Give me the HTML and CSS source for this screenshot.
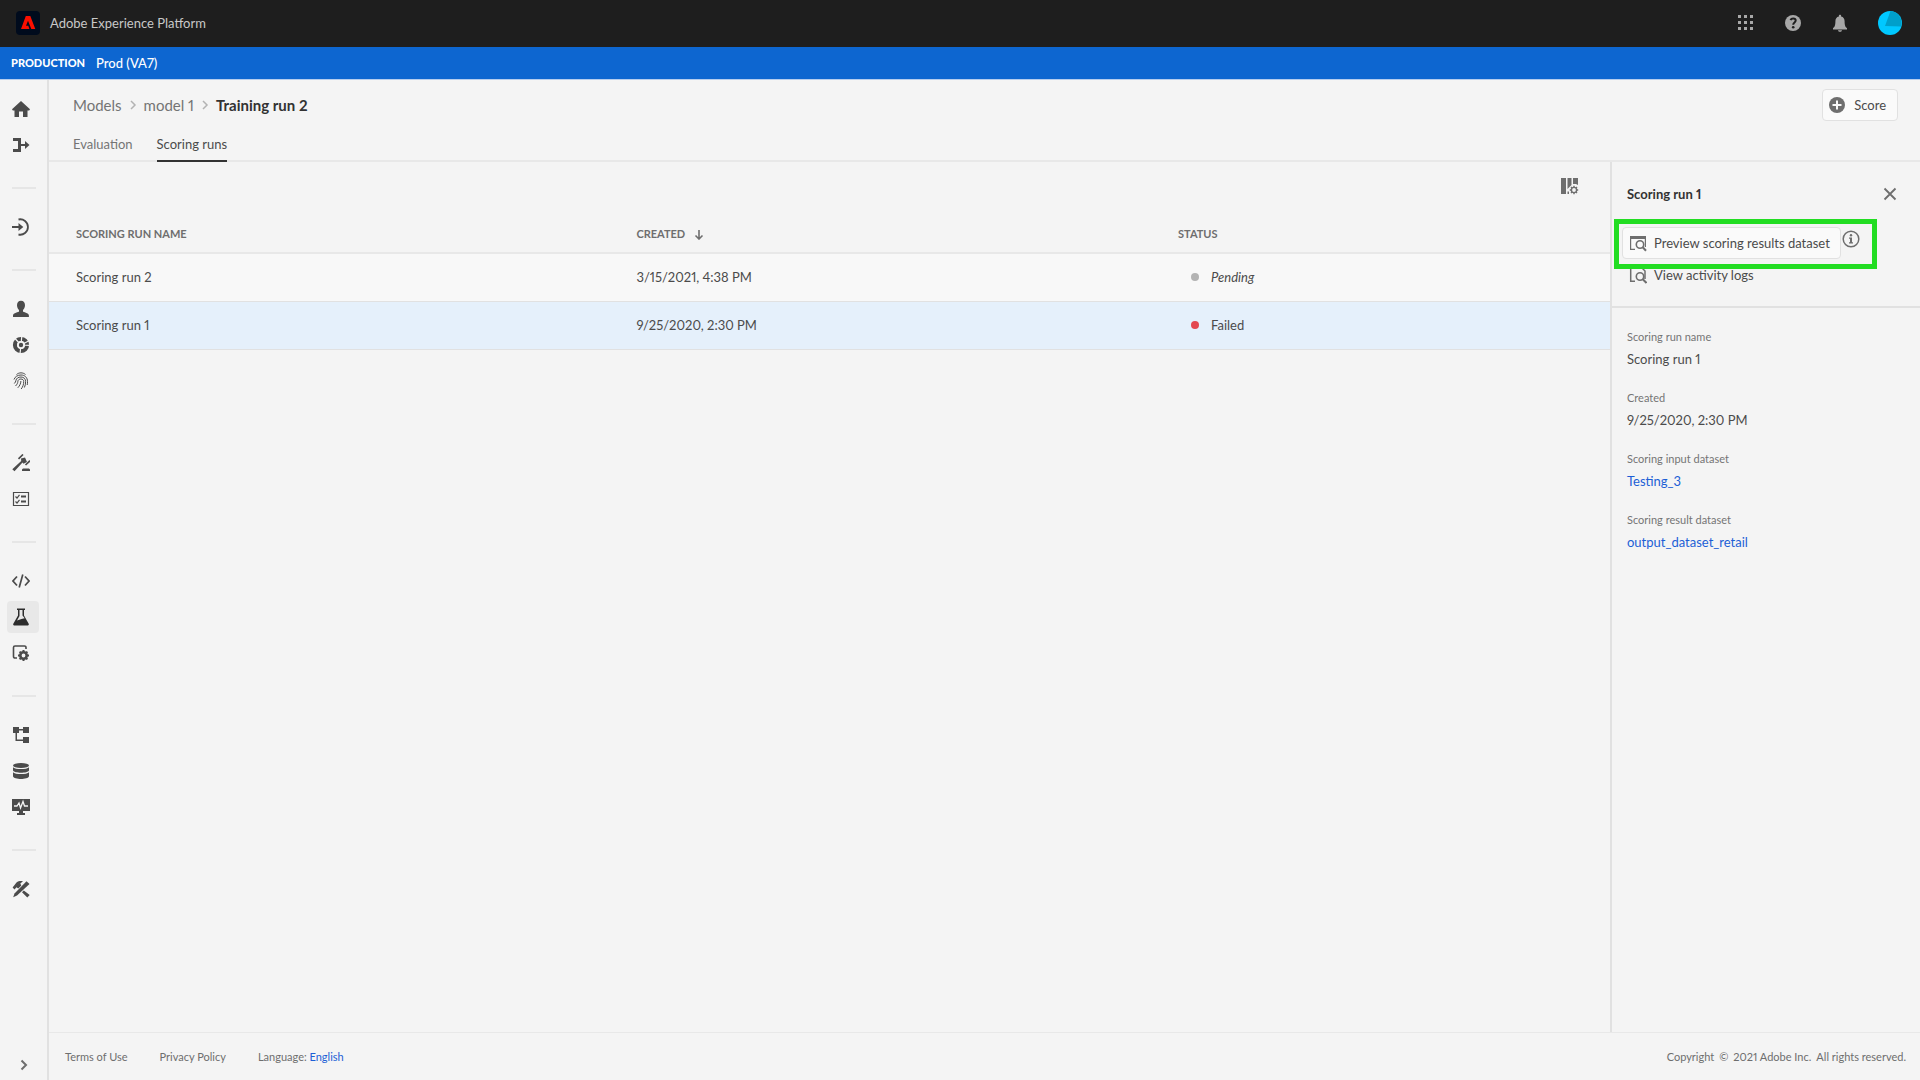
FILE: index.html
```html
<!DOCTYPE html>
<html lang="en">
<head>
<meta charset="UTF-8" />
<meta name="viewport" content="width=device-width, initial-scale=1" />
<title>Adobe Experience Platform</title>
<link rel="stylesheet" href="styles.css">
</head>
<body>

<header class="top-bar">
  <svg class="logo" viewBox="0 0 24 24" aria-hidden="true">
    <rect width="24" height="24" rx="4" fill="#000b1d"/>
    <path d="M9.800 5h4.500L19.300 18h-4l-3.300-8.200-2 5h2.300l1.100 3.200H5z" fill="#fa0f00"/>
  </svg>
  <span class="app-name">Adobe Experience Platform</span>
  <div class="top-actions">
    <button class="icon-btn" aria-label="Apps">
      <svg width="18" height="18" viewBox="0 0 18 18"><path d="M1 1h3v3H1zM7 1h3v3H7zM13 1h3v3h-3zM1 7h3v3H1zM7 7h3v3H7zM13 7h3v3h-3zM1 13h3v3H1zM7 13h3v3H7zM13 13h3v3h-3z"/></svg>
    </button>
    <button class="icon-btn" aria-label="Help">
      <svg width="18" height="18" viewBox="0 0 18 18"><circle cx="9" cy="9" r="8"/><path d="M6.500 6.200C7 4.900 8 4.400 9.100 4.400c1.500 0 2.600.9 2.600 2.200C11.700 8.500 9.200 8.600 9.200 10.800" fill="none" stroke="#1e1e1e" stroke-width="2"/><circle cx="9.200" cy="13.200" r="1.300" fill="#1e1e1e"/></svg>
    </button>
    <button class="icon-btn" aria-label="Notifications">
      <svg width="18" height="18" viewBox="0 0 18 18"><path d="M9 .8c.7 0 1.100.4 1.100 1v.6c2.400.5 3.500 2.300 3.500 4.800 0 4.300.9 5.900 2.400 6.800v1.400H2V14c1.500-.9 2.400-2.500 2.400-6.800 0-2.500 1.100-4.300 3.500-4.800v-.6c0-.6.4-1 1.100-1zM7 16.200h4c-.2.900-1 1.600-2 1.600s-1.800-.7-2-1.600z"/></svg>
    </button>
    <button class="avatar" aria-label="Account">
      <svg width="24" height="24" viewBox="0 0 24 24"><circle cx="12" cy="12" r="12" fill="#00c8ff"/><path d="M12.500 0A12 12 0 0 1 23 15.500L7 15z" fill="#009fca"/></svg>
    </button>
  </div>
</header>

<div class="env-bar"><strong>PRODUCTION</strong><span>Prod (VA7)</span></div>

<div class="shell">
  <nav class="rail" aria-label="Main">
    <a href="#" class="rail-item" aria-label="Home"><svg viewBox="0 0 18 18"><path d="M9 1l9 8.300-.8 1.200H15.500V17H11v-5.500H7V17H2.500v-6.500H.8L0 9.300z"/></svg></a>
    <a href="#" class="rail-item" aria-label="Workflows"><svg viewBox="0 0 18 18"><path d="M1 2h8v6h4V5l4.500 4-4.500 4v-3H9v6H1v-3h5V5H1z"/></svg></a>
    <hr>
    <a href="#" class="rail-item" aria-label="Sources"><svg viewBox="0 0 18 18"><path d="M0 8h6.500V5l4.800 4-4.800 4v-3H0z"/><path d="M6.500 1.500A7.700 7.700 0 1 1 6.500 16.500" fill="none" stroke="currentColor" stroke-width="1.800"/></svg></a>
    <hr>
    <a href="#" class="rail-item" aria-label="Profiles"><svg viewBox="0 0 18 18"><path d="M9 .8c2.600 0 4 2 4 4.500 0 2.200-1.200 3.900-2 4.700v1.500c0 .5 5.900 1.300 5.900 3.900V17H1v-1.600c0-2.600 6-3.400 6-3.900V10C6.200 9.200 5 7.500 5 5.300 5 2.800 6.400.8 9 .8z"/></svg></a>
    <a href="#" class="rail-item" aria-label="Segments"><svg viewBox="0 0 18 18"><circle cx="9" cy="9" r="6" fill="none" stroke="currentColor" stroke-width="4.200"/><path d="M9 9L9.800 0M9 9L17.500 4.500M9 9l9 .3M9 9L8 18M9 9L3 2.500" fill="none" stroke="#f4f4f4" stroke-width="1.200"/><circle cx="9" cy="9" r="3.900" fill="#f4f4f4"/><circle cx="9" cy="9" r="2.200"/></svg></a>
    <a href="#" class="rail-item" aria-label="Identities"><svg viewBox="0 0 18 18"><path d="M4.500 2.500C7.200.3 10.800.3 13.500 2.500M2 7.500C3 4.600 5.700 3 9 3c3.800 0 6.500 2.600 6.500 6.500 0 1.200 0 2.300-.3 3.500M2.300 11.500c1-1 1.500-2 1.600-3C4.300 6.300 6.300 5 9 5c2.700 0 4.600 1.900 4.600 4.500 0 2.200-.3 4.200-1.200 6M3.500 14c1.600-1.500 2.300-3 2.400-4.800C6 7.900 7.300 7 8.900 7c1.700 0 2.800 1.100 2.800 2.500 0 2.900-.8 5.300-2.500 7.500M5.800 15.800c1.900-2 3-4.200 3.100-6.800" fill="none" stroke="currentColor" stroke-width="1"/></svg></a>
    <hr>
    <a href="#" class="rail-item" aria-label="Policies"><svg viewBox="0 0 18 18"><path d="M9 4.500L13 3.500l2 4.500-3.500 1.800-1-1.300-8 8.800-2.200-2 8.900-8.300zM11 14.500h6l1 1v1.500h-8v-1.500z"/><path d="M6.500 4.800L11 .5M13.500 11L18 6.700" fill="none" stroke="currentColor" stroke-width="1.700"/></svg></a>
    <a href="#" class="rail-item" aria-label="Requests"><svg viewBox="0 0 18 18"><path d="M1.500 2.500h15v13h-15z" fill="none" stroke="currentColor" stroke-width="1.200"/><path d="M9 5.500h5v2H9zM9 10.500h5v2H9z"/><path d="M3.500 6.500L5 8l2.500-3.200M3.500 11.500L5 13l2.500-3.200" fill="none" stroke="currentColor" stroke-width="1.200"/></svg></a>
    <hr>
    <a href="#" class="rail-item" aria-label="Notebooks"><svg viewBox="0 0 18 18"><path d="M5 4.500L1 9l4 4.500M13 4.500L17 9l-4 4.500M10.800 2.500L7.200 15.500" fill="none" stroke="currentColor" stroke-width="1.700"/></svg></a>
    <a href="#" class="rail-item active" aria-label="Models" aria-current="page"><svg viewBox="0 0 18 18"><path d="M5 .5h8V2h-1v5.500l4.700 8.300c.3.800 0 1.700-.9 1.700H2.200c-.9 0-1.200-.9-.9-1.700L6 7.500V2H5zM7.500 2v6L5 12.500l4.500-1.500 3.200-.8L10.500 7.500V2z" fill-rule="evenodd"/></svg></a>
    <a href="#" class="rail-item" aria-label="Services"><svg viewBox="0 0 18 18"><path d="M5 14H3a1.500 1.500 0 0 1-1.500-1.500v-9A1.500 1.500 0 0 1 3 2h9.500A1.500 1.500 0 0 1 14 3.500V5" fill="none" stroke="currentColor" stroke-width="1.600"/><circle cx="11.500" cy="11.500" r="3.200" fill="none" stroke="currentColor" stroke-width="2.600"/><path d="M11.500 6v2M11.500 15v2M6 11.500h2M15 11.500h2M7.600 7.600L9 9M14 14l1.400 1.400M7.600 15.400L9 14M14 9l1.400-1.400" fill="none" stroke="currentColor" stroke-width="2"/></svg></a>
    <hr>
    <a href="#" class="rail-item" aria-label="Schemas"><svg viewBox="0 0 18 18"><path d="M1 1h6v2h4V1h6v6h-6V4.500H7V7H5v6.500h6V11h6v6h-6v-2H3.500V7H1z"/></svg></a>
    <a href="#" class="rail-item" aria-label="Datasets"><svg viewBox="0 0 18 18"><ellipse cx="9" cy="3.500" rx="8" ry="2.600"/><path d="M1 5.200c2 2.500 14 2.500 16 0v3.300c-1 3-15 3-16 0zM1 10.200c2 2.500 14 2.500 16 0v4c-1 3.600-15 3.600-16 0z"/></svg></a>
    <a href="#" class="rail-item" aria-label="Monitoring"><svg viewBox="0 0 18 18"><path d="M0 1h18v12h-7v2h2v2H5v-2h2v-2H0z"/><path d="M2 8h3l2-3 1.500 5L11 3.500 12.500 8H16" fill="none" stroke="#f4f4f4" stroke-width="1.300"/></svg></a>
    <hr>
    <a href="#" class="rail-item" aria-label="Tools"><svg viewBox="0 0 18 18"><path d="M4.500 2.500C6.500.8 9 .7 11 1.200L8.300 3.500l1 2L6.300 8.500 4.500 7.300 2.500 9.500.6 7.500zM11.800 10.500L17.700 15l-2.400 2.500-5.300-5.300z"/><path d="M14.500 1.300l3 2.700L5 15.500l-3.800 1.700L2.500 13.500z"/></svg></a>
    <button class="rail-toggle" aria-label="Expand navigation"><svg width="12" height="12" viewBox="0 0 12 12"><path d="M3.500 1.500L8 6l-4.500 4.500" fill="none" stroke="currentColor" stroke-width="2"/></svg></button>
  </nav>

  <div class="page">
    <div class="page-header">
      <nav class="breadcrumbs" aria-label="Breadcrumb">
        <a href="#">Models</a>
        <svg width="8" height="10" viewBox="0 0 8 10"><path d="M2 1l4 4-4 4" fill="none" stroke="#b3b3b3" stroke-width="1.500"/></svg>
        <a href="#">model 1</a>
        <svg width="8" height="10" viewBox="0 0 8 10"><path d="M2 1l4 4-4 4" fill="none" stroke="#b3b3b3" stroke-width="1.500"/></svg>
        <h1>Training run 2</h1>
      </nav>
      <button class="btn score-btn">
        <svg width="18" height="18" viewBox="0 0 18 18"><circle cx="9" cy="9" r="8"/><path d="M9 4.500v9M4.500 9h9" fill="none" stroke="#fafafa" stroke-width="2"/></svg>
        Score
      </button>
    </div>
    <nav class="tabs" aria-label="Run views">
      <a href="#">Evaluation</a>
      <a href="#" class="selected" aria-current="page">Scoring runs</a>
    </nav>

    <div class="content">
      <main class="runs">
        <div class="toolbar">
          <button class="icon-btn" aria-label="Column settings">
            <svg width="18" height="18" viewBox="0 0 18 18"><path d="M0 1h5v16H0zM6.500 1h4v7L8.500 10 6.500 12zM12 1h5v7l-2-1h-3zM6.500 14.500h1.500v2.500H6.500z"/><circle cx="13" cy="13" r="2.600" fill="none" stroke="currentColor" stroke-width="1.400"/><path d="M13 8.800v1.500M13 15.700v1.500M8.800 13h1.500M15.700 13h1.500M10 10l1 1M15 15l1 1M10 16l1-1M15 11l1-1" fill="none" stroke="currentColor" stroke-width="1.400"/></svg>
          </button>
        </div>
        <table>
          <thead>
            <tr>
              <th class="col-name">SCORING RUN NAME</th>
              <th class="col-created" aria-sort="descending">CREATED <svg width="10" height="10" viewBox="0 0 10 10"><path d="M5 0v9M1.500 5.500L5 9l3.500-3.500" fill="none" stroke="currentColor" stroke-width="1.600"/></svg></th>
              <th>STATUS</th>
            </tr>
          </thead>
          <tbody>
            <tr>
              <td>Scoring run 2</td>
              <td>3/15/2021, 4:38 PM</td>
              <td><span class="status pending">Pending</span></td>
            </tr>
            <tr class="selected">
              <td>Scoring run 1</td>
              <td>9/25/2020, 2:30 PM</td>
              <td><span class="status failed">Failed</span></td>
            </tr>
          </tbody>
        </table>
      </main>

      <aside class="details">
        <div class="details-header">
          <h2>Scoring run 1</h2>
          <button class="icon-btn" aria-label="Close">
            <svg width="14" height="14" viewBox="0 0 14 14"><path d="M1.500 1.500l11 11M12.500 1.500l-11 11" fill="none" stroke="currentColor" stroke-width="1.800"/></svg>
          </button>
        </div>
        <div class="details-actions">
          <div class="action-row">
            <button class="btn">
              <svg width="18" height="18" viewBox="0 0 18 18"><path d="M1 2h16v3H1z"/><path d="M1.600 4v11.400H6M16.400 4v9" fill="none" stroke="currentColor" stroke-width="1.200"/><circle cx="11" cy="10.500" r="3.700" fill="none" stroke="currentColor" stroke-width="1.600"/><path d="M13.500 13l3.500 3.800" stroke="currentColor" stroke-width="2"/></svg>
              Preview scoring results dataset
            </button>
            <button class="icon-btn info" aria-label="More information">
              <svg width="18" height="18" viewBox="0 0 18 18"><circle cx="9" cy="9" r="7.800" fill="none" stroke="currentColor" stroke-width="1.500"/><circle cx="9" cy="5.300" r="1.200"/><path d="M7 7.500h3v4.700h1v1.300H7v-1.300h1V8.800H7z"/></svg>
            </button>
          </div>
          <button class="btn quiet">
            <svg width="18" height="18" viewBox="0 0 18 18"><path d="M1.700 1v14.300H6M4 1h8l4 4v8" fill="none" stroke="currentColor" stroke-width="1.500"/><circle cx="11" cy="10.500" r="3.700" fill="none" stroke="currentColor" stroke-width="1.600"/><path d="M13.500 13l4 4" stroke="currentColor" stroke-width="2"/></svg>
            View activity logs
          </button>
          <div class="highlight"></div>
        </div>
        <dl>
          <dt>Scoring run name</dt>
          <dd>Scoring run 1</dd>
          <dt>Created</dt>
          <dd>9/25/2020, 2:30 PM</dd>
          <dt>Scoring input dataset</dt>
          <dd><a href="#">Testing_3</a></dd>
          <dt>Scoring result dataset</dt>
          <dd><a href="#">output_dataset_retail</a></dd>
        </dl>
      </aside>
    </div>

    <footer>
      <a href="#">Terms of Use</a>
      <a href="#">Privacy Policy</a>
      <span>Language: <a href="#" class="link">English</a></span>
      <span class="copyright"><span>Copyright</span> <span>©</span> <span>2021 Adobe Inc.</span> <span>All rights reserved.</span></span>
    </footer>
  </div>
</div>

</body>
</html>
```
FILE: styles.css
```css
* {
  box-sizing: border-box;
}

body {
  display: flex;
  flex-direction: column;
  min-height: 100vh;
  margin: 0;
  background-color: #f4f4f4;
  color: #4b4b4b;
  font-family: Lato, "Open Sans", sans-serif;
  font-size: 13px;
  font-variant-numeric: proportional-nums;
  line-height: 18px;
}

a {
  color: inherit;
  text-decoration: none;
}

button {
  margin: 0;
  padding: 0;
  border: none;
  background: none;
  color: inherit;
  font: inherit;
  cursor: pointer;
}

svg {
  display: block;
  flex: none;
  fill: currentColor;
}

.top-bar {
  display: flex;
  align-items: center;
  height: 47px;
  padding: 0 18px 1px 16px;
  background-color: #1e1e1e;
  color: #c8c8c8;
}

.logo {
  width: 24px;
  height: 24px;
  margin-right: 10px;
}

.top-actions {
  display: flex;
  align-items: center;
  gap: 29px;
  margin-left: auto;
  color: #a8a8a8;
}

.env-bar {
  display: flex;
  align-items: center;
  gap: 11px;
  height: 33px;
  padding: 0 11px;
  border-bottom: 1px solid #b5cdee;
  background-color: #0d66d0;
  color: #fff;
  font-size: 13px;
  font-weight: 500;
}

.env-bar strong {
  font-size: 11px;
  font-weight: 900;
}

.shell {
  display: flex;
  flex: 1;
}

.rail {
  display: flex;
  flex-direction: column;
  width: 49px;
  padding-top: 11px;
  border-right: 2px solid #e1e1e1;
}

.rail-item {
  width: 32px;
  height: 32px;
  margin: 2px 7px;
  padding: 7px 5px;
  border-radius: 4px;
}

.rail-item svg {
  width: 18px;
  height: 18px;
}

.rail-item.active {
  background-color: #e8e8e8;
  color: #2c2c2c;
}

.rail hr {
  width: 24px;
  height: 2px;
  margin: 24px 12px 20px;
  border: none;
  background-color: #e6e6e6;
}

.rail-toggle {
  margin: auto 0 9px 18px;
  width: 12px;
  color: #6e6e6e;
}

.page {
  display: flex;
  flex: 1;
  flex-direction: column;
  min-width: 0;
}

.page-header {
  display: flex;
  align-items: center;
  justify-content: space-between;
  height: 49px;
  padding: 0 22px 0 24px;
}

.breadcrumbs {
  display: flex;
  align-items: center;
  gap: 7px;
  color: #747474;
  font-size: 15px;
}

.breadcrumbs h1 {
  margin: 0;
  color: #323232;
  font-size: 15px;
  line-height: 18px;
}

.btn {
  display: flex;
  align-items: center;
  gap: 7px;
  height: 32px;
  padding: 0 10px 0 6px;
  border: 1px solid #e1e1e1;
  border-radius: 4px;
  background-color: #fafafa;
}

.btn svg {
  color: #6e6e6e;
}

.score-btn {
  padding: 0 11px 0 5px;
  gap: 8px;
}

.btn.quiet {
  border-color: transparent;
  background: none;
}

.tabs {
  display: flex;
  gap: 24px;
  height: 33px;
  padding: 0 24px;
  border-bottom: 2px solid #e8e8e8;
  color: #747474;
}

.tabs a {
  height: 33px;
  padding-top: 6px;
}

.tabs .selected {
  border-bottom: 2px solid #323232;
  color: #4b4b4b;
}

.content {
  display: flex;
  flex: 1;
}

.runs {
  flex: 1;
}

.toolbar {
  display: flex;
  justify-content: flex-end;
  padding: 15px 31px 20px;
  color: #6e6e6e;
}

table {
  width: 100%;
  border-collapse: collapse;
  table-layout: fixed;
}

th, td {
  height: 48px;
  padding: 0 27px;
  border-bottom: 1px solid #e1e1e1;
  text-align: left;
}

th {
  height: 38px;
  border-bottom: 2px solid #e8e8e8;
  color: #6e6e6e;
  font-size: 11px;
}

th svg {
  display: inline-block;
  margin-left: 6px;
  vertical-align: middle;
}

.col-name {
  width: 35.9%;
}

.col-created {
  width: 34.7%;
}

tbody tr {
  background-color: #f8f8f8;
}

tbody tr.selected {
  background-color: #e5f0fb;
}

.status {
  display: flex;
  align-items: center;
  gap: 12px;
  padding-left: 13px;
}

.status::before {
  width: 8px;
  height: 8px;
  border-radius: 50%;
  content: "";
}

.pending {
  font-style: italic;
}

.pending::before {
  background-color: #b3b3b3;
}

.failed::before {
  background-color: #e34850;
}

.details {
  width: 310px;
  border-left: 2px solid #e1e1e1;
}

.details-header {
  display: flex;
  align-items: center;
  justify-content: space-between;
  height: 64px;
  padding: 0 23px 0 15px;
}

.details-header h2 {
  margin: 0;
  color: #323232;
  font-size: 13px;
}

.details .icon-btn {
  color: #6e6e6e;
}

.details-actions {
  position: relative;
  height: 82px;
  padding: 1px 10px;
  border-bottom: 2px solid #e1e1e1;
}

.action-row {
  display: flex;
  gap: 1px;
}

.info {
  align-self: flex-start;
  margin-top: 3px;
}

/* green frame over the preview action */
.highlight {
  position: absolute;
  top: -7px;
  left: 2px;
  width: 263px;
  height: 50px;
  border: 5px solid #22dd22;
  pointer-events: none;
}

dl {
  margin: 0;
  padding: 20px 15px;
}

dt {
  color: #747474;
  font-size: 11px;
}

dd {
  margin: 4px 0 21px;
}

dd a, .link {
  color: #1c5fd6;
}

footer {
  display: flex;
  align-items: center;
  gap: 32px;
  height: 48px;
  padding: 0 14px 0 16px;
  border-top: 1px solid #e8e8e8;
  color: #6e6e6e;
  font-size: 11px;
}

.copyright {
  display: flex;
  gap: 5px;
  margin-left: auto;
}
```
